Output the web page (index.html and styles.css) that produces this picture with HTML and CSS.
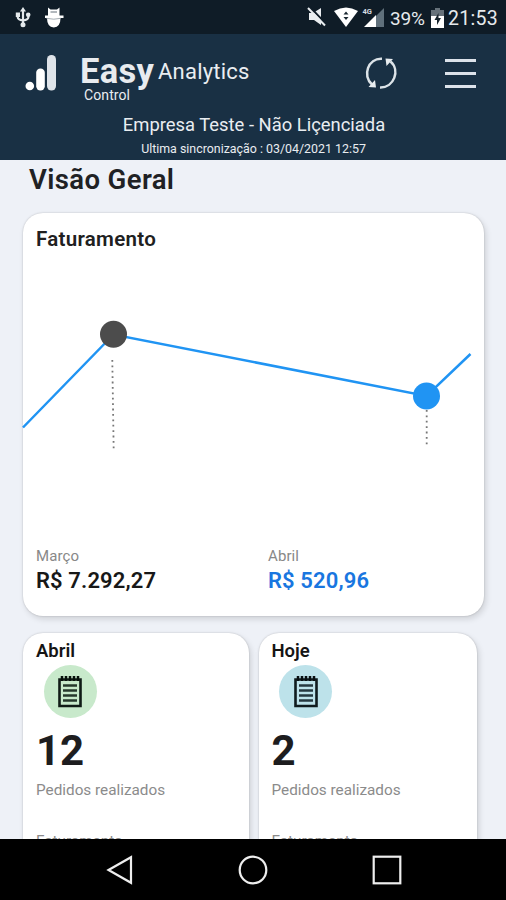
FILE: index.html
```html
<!DOCTYPE html>
<html lang="pt-BR">
<head>
<meta charset="utf-8">
<title>Easy Control Analytics</title>
<link rel="stylesheet" href="styles.css">
</head>
<body>
<div class="screen">
  <div class="status">
    <svg class="status-left" width="50" height="34" viewBox="0 0 50 34">
      <g fill="none" stroke="#e4e9ec" stroke-width="2.200"><path d="M8 10v15M2.800 14v3.500q0 2 5.200 3M13.300 14v3.500q0 2-5.200 3"/></g>
      <g fill="#e4e9ec"><path d="M8 7l3 4.500H5z"/><circle cx="8" cy="24.700" r="2.500"/><rect x=".8" y="12.500" width="4.200" height="4.500"/><circle cx="13.200" cy="14.700" r="2.300"/></g>
      <path fill="#fff" d="M33 7.500l2.500 2h6.500L44.500 7.500v8h4v2.500h-3q0 9-6.700 9.500-6.800-.5-6.800-9.500h-2v-2.500h3z"/>
      <path d="M31 18.300q8 1.800 15 0" fill="none" stroke="#7c8890" stroke-width=".7"/>
      <path d="M35.500 12h6.500" stroke="#65717a" stroke-width="1"/>
    </svg>
    <div class="status-right">
      <svg class="signals" width="80" height="34" viewBox="0 0 80 34">
        <path fill="#e9edf0" d="M3 13h4l8-5v17l-7-5H3z"/>
        <path d="M4 7l16 17" stroke="#0f1c27" stroke-width="2"/><path d="M2 8l17 17.500" stroke="#e9edf0" stroke-width="2"/>
        <path fill="#fff" d="M28 11q12-7 24 0L40 27z"/>
        <path fill="#182630" d="M37.500 14.500l2.500-3 2.500 3zM37.500 17l2.500 3 2.500-3z"/>
        <path fill="#60707b" d="M70 16l8-8v19h-8z"/><path fill="#fff" d="M58 27l12-12v12z"/>
        <text x="56.500" y="14" class="network">4G</text>
      </svg>
      <span class="percent">39%</span>
      <svg class="battery" width="13" height="20" viewBox="0 0 13 20">
        <path fill="#66717a" d="M4 0h5v2h4v6H0V2h4z"/><path fill="#fff" d="M0 8h13v12H0z"/><path fill="#17232c" d="M7.500 5L3.500 12H6v5l4-7H7.500z"/>
      </svg>
      <span class="clock">21:53</span>
    </div>
  </div>

  <header class="header">
    <div class="brand-row">
      <svg class="logo" width="32" height="36" viewBox="0 0 32 36">
        <circle cx="4.800" cy="31" r="4.300" fill="#fff"/><rect x="11.200" y="13.500" width="8.600" height="22" rx="4.200" fill="#fff"/><rect x="22" y="0" width="9" height="35.500" rx="4.400" fill="#dfe4ea"/>
      </svg>
      <div class="brand">
        <div class="names"><span class="easy">Easy</span><span class="analytics">Analytics</span></div>
        <div class="control">Control</div>
      </div>
      <svg class="sync" width="34" height="34" viewBox="0 0 34 34">
        <g fill="none" stroke="#dce3e8" stroke-width="2.500"><path d="M18 2.800C4 2-2 20 8 28.500M16 31.500C30 32 36.500 14 26.500 5.500"/></g>
        <path fill="#e8edf0" d="M21.500 2.500l7.500.5-6.500 7zM12 31.500l-7.500-.5 6.500-7z"/>
      </svg>
      <div class="menu"><i></i><i></i><i></i></div>
    </div>
    <div class="company">Empresa Teste - Não Liçenciada</div>
    <div class="synced">Ultima sincronização : 03/04/2021 12:57</div>
  </header>

  <main class="content">
    <h1 class="title">Visão Geral</h1>
    <section class="card revenue">
      <h2 class="revenue-title">Faturamento</h2>
      <svg class="chart" width="461" height="288" viewBox="23 254 461 288">
        <path d="M112.300 360L113.700 451M426.700 410V446" class="guide"/>
        <path d="M23 427.500L113.500 334.500 426.500 396 470.500 354" class="line"/>
        <circle cx="113.500" cy="334.300" r="13.500" fill="#4c4c4c"/>
        <circle cx="426.500" cy="396" r="13.500" fill="#2094f3"/>
      </svg>
      <div class="totals">
        <div class="total"><div class="month">Março</div><div class="amount">R$ 7.292,27</div></div>
        <div class="total"><div class="month">Abril</div><div class="amount current">R$ 520,96</div></div>
      </div>
    </section>
    <div class="cards">
      <section class="card orders">
        <h3 class="period">Abril</h3>
        <div class="badge green">
          <svg width="24" height="33" viewBox="0 0 24 33"><path d="M1.500 4.500h21v26.500h-21z" fill="none" stroke="#101b16" stroke-width="2.600"/><path d="M4 1v5M8 1v5M12 1v5M16 1v5M20 1v5" stroke="#08100c" stroke-width="2.500"/><path d="M5 10.500h14M5 15.500h14M5 20.500h14M5 25.500h14" stroke="#26382c" stroke-width="2.600"/></svg>
        </div>
        <div class="count">12</div>
        <div class="label">Pedidos realizados</div>
        <div class="label next">Faturamento</div>
      </section>
      <section class="card orders">
        <h3 class="period">Hoje</h3>
        <div class="badge blue">
          <svg width="24" height="33" viewBox="0 0 24 33"><path d="M1.500 4.500h21v26.500h-21z" fill="none" stroke="#101b1e" stroke-width="2.600"/><path d="M4 1v5M8 1v5M12 1v5M16 1v5M20 1v5" stroke="#080f12" stroke-width="2.500"/><path d="M5 10.500h14M5 15.500h14M5 20.500h14M5 25.500h14" stroke="#263840" stroke-width="2.600"/></svg>
        </div>
        <div class="count">2</div>
        <div class="label">Pedidos realizados</div>
        <div class="label next">Faturamento</div>
      </section>
    </div>
  </main>

  <nav class="nav">
    <svg width="28" height="32" viewBox="0 0 28 32"><path d="M2.500 16L25 3.200v25.600z"/></svg>
    <svg width="32" height="32" viewBox="0 0 32 32"><circle cx="16" cy="16" r="13.300"/></svg>
    <svg width="32" height="32" viewBox="0 0 32 32"><rect x="2.700" y="2.700" width="26.600" height="26.600"/></svg>
  </nav>
</div>
</body>
</html>
```
FILE: styles.css
```css
* { box-sizing: border-box; margin: 0; }
body { font-family: Roboto, sans-serif; background: #eef1f7; }
svg { display: block; flex: none; }
.screen { width: 506px; height: 900px; display: flex; flex-direction: column; overflow: hidden; }

.status { height: 34px; flex: none; background: #0f1c27; display: flex; justify-content: space-between; padding: 0 8px 0 15px; color: #e6eaed; }
.status-right { display: flex; align-items: center; }
.network { font-size: 7.500px; font-weight: 700; fill: #d3dbe0; }
.percent { font-size: 19px; line-height: 34px; width: 36px; margin: 4px 5px 0 4px; white-space: nowrap; letter-spacing: -.2px; }
.battery { margin-top: 2px; }
.clock { font-size: 19.500px; line-height: 34px; width: 50px; margin: 4px 0 0 4px; white-space: nowrap; letter-spacing: .3px; }

.header { height: 126px; flex: none; background: #193044; color: #e9edf1; text-align: center; }
.brand-row { height: 78px; display: flex; align-items: flex-start; padding-left: 25px; text-align: left; }
.logo { margin-top: 21px; }
.brand { width: 192px; margin: 16px 0 0 23px; }
.names { display: flex; height: 37px; }
.easy { width: 78px; font-size: 34.500px; line-height: 43px; font-weight: 700; color: #e8ebef; letter-spacing: .3px; }
.analytics { font-size: 22px; line-height: 43px; letter-spacing: .22px; }
.control { padding-left: 4px; font-size: 14px; line-height: 16px; letter-spacing: .1px; }
.sync { margin: 22px 0 0 92px; }
.menu { width: 31px; margin: 25px 0 0 47px; display: flex; flex-direction: column; gap: 10.500px; }
.menu i { height: 2.500px; background: #dce2ea; }
.company { font-size: 18.400px; line-height: 25px; padding-left: 2px; white-space: nowrap; }
.synced { font-size: 12.400px; line-height: 23px; padding-left: 1px; white-space: nowrap; }

.content { height: 679px; flex: none; padding-left: 23px; overflow: hidden; background: #eef1f7; }
.title { padding-left: 6px; height: 53px; font-size: 27.500px; line-height: 40px; font-weight: 600; color: #202124; letter-spacing: .38px; }
.card { background: #fff; border-radius: 20px; box-shadow: 2px 3px 6px #0002, 0 0 2px #0003; }
.revenue { width: 461px; height: 403px; }
.revenue-title { height: 41px; padding: 13px 0 0 13px; font-size: 20.500px; line-height: 26px; font-weight: 600; color: #202020; letter-spacing: .3px; }
.chart { overflow: visible; }
.line { fill: none; stroke: #2094f3; stroke-width: 2.500; }
.guide { fill: none; stroke: #777; stroke-width: 1.800; stroke-dasharray: 1.800 3.600; }
.totals { display: flex; padding-left: 13px; }
.total { width: 232px; flex: none; }
.month { font-size: 15px; line-height: 28px; color: #888; letter-spacing: .1px; }
.amount { font-size: 22px; line-height: 21px; font-weight: 600; color: #181818; letter-spacing: .12px; }
.current { color: #1976e0; }
.cards { display: flex; gap: 10px; margin-top: 17px; }
.orders { width: 226px; height: 300px; padding: 6px 0 0 13px; }
.orders + .orders { width: 218px; padding-left: 12.500px; }
.period { font-size: 18.500px; line-height: 24px; font-weight: 600; color: #151515; }
.badge { width: 53px; height: 53px; margin: 2px 0 0 7.500px; border-radius: 50%; display: flex; align-items: center; justify-content: center; }
.green { background: #c8e9cb; }
.blue { background: #bde2ea; }
.count { margin-top: 8px; font-size: 42px; line-height: 49px; font-weight: 700; color: #1d1d1f; }
.label { margin-top: 5px; font-size: 15.300px; line-height: 20px; color: #8b8b8b; }
.next { margin-top: 31px; }

.nav { height: 61px; flex: none; background: #000; display: flex; align-items: center; padding-left: 106px; }
.nav svg { fill: none; stroke: #eee; stroke-width: 2.200; }
.nav svg + svg { margin-left: 103px; }
.nav svg + svg + svg { margin-left: 101.500px; }
```
